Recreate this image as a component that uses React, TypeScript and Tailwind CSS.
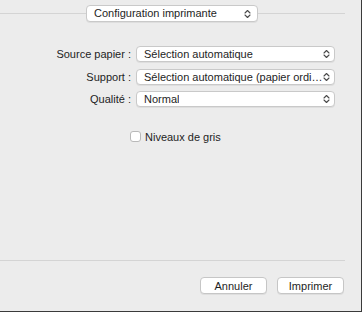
const font = { fontFamily: '"Liberation Sans", Arial, sans-serif' };

function Chevrons() {
  return (
    <svg width="7" height="10" viewBox="0 0 7 10" fill="none" className="shrink-0">
      <path d="M1 4 L3.5 1.5 L6 4" stroke="#4a4a4a" strokeWidth="1.1" strokeLinecap="round" strokeLinejoin="round" />
      <path d="M1 6 L3.5 8.5 L6 6" stroke="#4a4a4a" strokeWidth="1.1" strokeLinecap="round" strokeLinejoin="round" />
    </svg>
  );
}

function Select({ value }: { value: string }) {
  return (
    <div className="h-[16px] flex items-center justify-between pl-[7px] pr-[4px] bg-white border border-[#c9c9c9] rounded-[4px] shadow-[0_1px_0_rgba(0,0,0,0.06)]">
      <span className="truncate">{value}</span>
      <Chevrons />
    </div>
  );
}

export default function App() {
  const rows = [
    ["Source papier :", "Sélection automatique"],
    ["Support :", "Sélection automatique (papier ordi…"],
    ["Qualité :", "Normal"],
  ];

  return (
    <div
      style={font}
      className="w-[362px] h-[312px] bg-[#ececec] text-[11px] text-[#1e1e1e] flex flex-col border-r border-b border-[#3a3a3a] overflow-hidden"
    >
      <div className="flex items-center pt-[5px] pr-[16px]">
        <div className="w-[86px] h-px bg-[#d4d4d4]" />
        <div className="w-[172px] h-[17px] flex items-center justify-between pl-[7px] pr-[6px] bg-white border border-[#c9c9c9] rounded-[4px] shadow-[0_1px_0_rgba(0,0,0,0.06)]">
          <span>Configuration imprimante</span>
          <Chevrons />
        </div>
        <div className="flex-1 h-px bg-[#d4d4d4]" />
      </div>

      <div className="mt-[24px] grid grid-cols-[131px_199px] gap-x-[5px] gap-y-[6px] items-center">
        {rows.map(([label, value]) => (
          <div key={label} className="contents">
            <span className="text-right">{label}</span>
            <Select value={value} />
          </div>
        ))}
      </div>

      <div className="mt-[21px] ml-[130px] flex items-center gap-[4px]">
        <div className="w-[11px] h-[11px] bg-white border border-[#b9b9b9] rounded-[3px]" />
        <span>Niveaux de gris</span>
      </div>

      <div className="mt-auto">
        <div className="mr-[16px] h-px bg-[#d4d4d4]" />
        <div className="flex justify-end gap-[10px] pt-[16px] pb-[17px] pr-[17px]">
          <button className="w-[67px] h-[17px] bg-white border border-[#c6c6c6] rounded-[4px] shadow-[0_1px_0_rgba(0,0,0,0.06)]">
            Annuler
          </button>
          <button className="w-[67px] h-[17px] bg-white border border-[#c6c6c6] rounded-[4px] shadow-[0_1px_0_rgba(0,0,0,0.06)]">
            Imprimer
          </button>
        </div>
      </div>
    </div>
  );
}
